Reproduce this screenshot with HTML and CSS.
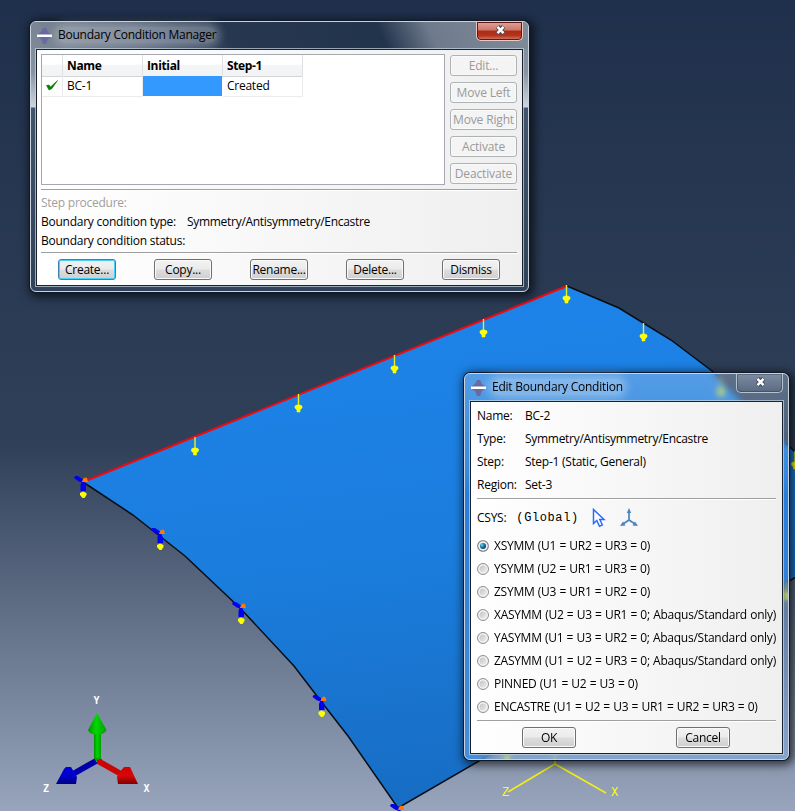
FILE: index.html
```html
<!DOCTYPE html>
<html lang="en">
<head>
<meta charset="utf-8">
<title>Boundary Condition Manager</title>
<link rel="stylesheet" href="styles.css">
</head>
<body>
<svg class="scene" width="795" height="811" viewBox="0 0 795 811">
  <defs>
    <linearGradient id="shell" x1="0.4" y1="0" x2="0.55" y2="1">
      <stop offset="0" stop-color="#1e84ea"/><stop offset=".5" stop-color="#1b7ddd"/><stop offset="1" stop-color="#176cc2"/>
    </linearGradient>
    <linearGradient id="green"><stop offset="0" stop-color="#009400"/><stop offset=".45" stop-color="#00d800"/><stop offset="1" stop-color="#009c00"/></linearGradient>
    <linearGradient id="red" x1="0" y1="0" x2="0" y2="1"><stop offset="0" stop-color="#d00000"/><stop offset=".5" stop-color="#d80808"/><stop offset="1" stop-color="#800000"/></linearGradient>
    <linearGradient id="blue" x1="0" y1="0" x2="0" y2="1"><stop offset="0" stop-color="#0000d8"/><stop offset=".5" stop-color="#0000d0"/><stop offset="1" stop-color="#000080"/></linearGradient>
    <g id="load"><path d="M0 0V14" stroke="#e8ee20" stroke-width="1.4"/><path d="M-3.500 12L-1.500 11H1.500L3.500 12V14L1.500 16V18H-1.500V16L-3.500 14Z" fill="#ff0" stroke="#ff0" stroke-width=".6"/></g>
    <g id="support">
      <path d="M-9-3L-8-5-5-5-2-3 1-1 0 1-3 1-5 0Z" fill="#0000f0"/>
      <path d="M-1 0H1L3 5V10H-2.500V4Z" fill="#0000f0"/>
      <path d="M-1 1L0-2 2-3.500 4-3 5 1Z" fill="#ff7600"/>
      <path d="M-3 12L0 10.500 3.500 12V14L1.500 17H-.5L-3 14Z" fill="#ff0"/>
    </g>
  </defs>
  <path d="M83 482L567 286 619 308 671 340 712 371 795 452 815 475V566L398 808 348 736 320 700 294 666 241 609 185 556 133 515Z" fill="url(#shell)"/>
  <path d="M567 286L619 308 671 340 712 371 795 452M815 566L398 808 348 736 320 700 294 666 241 609 185 556 133 515 83 482" fill="none" stroke="#080d14" stroke-width="1.500"/>
  <path d="M83 482L567 286" stroke="#ec0a10" stroke-width="2"/>
  <use href="#load" x="566.500" y="285"/><use href="#load" x="483.500" y="319"/><use href="#load" x="394.500" y="355"/>
  <use href="#load" x="298.500" y="394"/><use href="#load" x="195" y="437"/><use href="#load" x="643.500" y="323"/>
  <use href="#load" x="721" y="378"/><use href="#load" x="795" y="451"/><use href="#load" x="786" y="582"/>
  <use href="#support" x="83" y="481"/><use href="#support" x="160" y="533"/><use href="#support" x="241" y="607"/>
  <use href="#support" x="321.500" y="700"/><use href="#support" x="399" y="809"/>
  <g class="datum"><path d="M555 730V764L508 792M555 764L606 793"/><circle cx="507" cy="757" r="3"/><text x="502" y="796">Z</text><text x="611" y="796">X</text></g>
  <path d="M94 733H101V760H94Z" fill="url(#green)"/>
  <path d="M97 713L106.500 730Q104 735 97 734.500 90 735 88 730Z" fill="url(#green)"/>
  <path d="M98 761L121 774" stroke="#c80606" stroke-width="6"/>
  <path d="M124 767H130L138 784H118L117 777 119 773Z" fill="url(#red)"/>
  <path d="M96 761L73 774" stroke="#0000a8" stroke-width="6"/>
  <path d="M66 767H71L77 777 76 784H56L64 769Z" fill="url(#blue)"/>
  <path d="M94 758H101L98 763Z" fill="#00a000"/><path d="M97 760L102 759 102 765 97 763Z" fill="#d80000"/>
  <g class="axis"><text x="93.500" y="704">Y</text><text x="143.500" y="792">X</text><text x="43" y="792">Z</text></g>
</svg>

<section class="window manager">
  <header class="titlebar">
    <svg class="logo" width="15" height="16" viewBox="0 0 15 16"><path d="M6 0H9L11 4 14 6V9L11 11 9 16H6L4 11 1 9V6L4 4Z" fill="#696a9f"/><path d="M0 6.500H15V9H0Z" fill="#fff"/></svg>
    <h1>Boundary Condition Manager</h1>
    <span class="close"><svg width="11" height="10" viewBox="0 0 11 10"><path d="M2.500 1.500L8.500 8.500M8.500 1.500L2.500 8.500" stroke="#434c60" stroke-width="4.500"/><path d="M2.500 1.800L8.500 8.200M8.500 1.800L2.500 8.200" stroke="#fff" stroke-width="2.500"/></svg></span>
  </header>
  <div class="panel">
    <div class="top">
      <div class="list">
        <div class="row head"><span></span><span>Name</span><span>Initial</span><span>Step-1</span></div>
        <div class="row"><span class="tick"><svg width="13" height="11" viewBox="0 0 13 11"><path d="M.5 5.500L3 5 4.500 7 11.500 .5 6 8.500 3 10Z" fill="#008000" stroke="#008000" stroke-width=".6"/></svg></span><span>BC-1</span><span class="propagated"></span><span>Created</span></div>
      </div>
      <div class="side">
        <button disabled>Edit...</button><button disabled>Move Left</button><button disabled>Move Right</button><button disabled>Activate</button><button disabled>Deactivate</button>
      </div>
    </div>
    <hr>
    <div class="info">
      <p class="muted">Step procedure:</p>
      <p><span>Boundary condition type:</span><span class="value">Symmetry/Antisymmetry/Encastre</span></p>
      <p>Boundary condition status:</p>
    </div>
    <hr>
    <div class="actions"><button class="default">Create...</button><button>Copy...</button><button>Rename...</button><button>Delete...</button><button>Dismiss</button></div>
  </div>
</section>

<section class="window editor">
  <header class="titlebar">
    <svg class="logo" width="15" height="16" viewBox="0 0 15 16"><path d="M6 0H9L11 4 14 6V9L11 11 9 16H6L4 11 1 9V6L4 4Z" fill="#696a9f"/><path d="M0 6.500H15V9H0Z" fill="#fff"/></svg>
    <h1>Edit Boundary Condition</h1>
    <span class="close"><svg width="11" height="10" viewBox="0 0 11 10"><path d="M2.500 1.500L8.500 8.500M8.500 1.500L2.500 8.500" stroke="#434c60" stroke-width="4.500"/><path d="M2.500 1.800L8.500 8.200M8.500 1.800L2.500 8.200" stroke="#fff" stroke-width="2.500"/></svg></span>
  </header>
  <div class="panel">
    <dl>
      <dt>Name:</dt><dd>BC-2</dd>
      <dt>Type:</dt><dd class="value">Symmetry/Antisymmetry/Encastre</dd>
      <dt>Step:</dt><dd>Step-1 (Static, General)</dd>
      <dt>Region:</dt><dd>Set-3</dd>
    </dl>
    <hr>
    <div class="csys"><span>CSYS:</span><span class="mono">(Global)</span>
      <svg class="pick" width="14" height="20" viewBox="0 0 14 20"><path d="M1.500 1.500V15.500L4.800 12.500 7.500 18.200 10.300 16.800 7.800 11.500H12Z" fill="#fff" stroke="#2b6bff" stroke-width="1.500"/></svg>
      <svg class="triad" width="18" height="20" viewBox="0 0 18 20"><path d="M9 4V12L3 16M9 12L15 16" fill="none" stroke="#4b84c0" stroke-width="1.700"/><path d="M9 0L11.200 5H6.800ZM0 18L3 13.500 5.500 17.500ZM18 18L15 13.500 12.500 17.500Z" fill="#4b84c0"/></svg>
    </div>
    <div class="options">
      <label><i class="radio on"></i><span>XSYMM (U1 = UR2 = UR3 = 0)</span></label>
      <label><i class="radio"></i><span>YSYMM (U2 = UR1 = UR3 = 0)</span></label>
      <label><i class="radio"></i><span>ZSYMM (U3 = UR1 = UR2 = 0)</span></label>
      <label><i class="radio"></i><span>XASYMM (U2 = U3 = UR1 = 0; Abaqus/Standard only)</span></label>
      <label><i class="radio"></i><span>YASYMM (U1 = U3 = UR2 = 0; Abaqus/Standard only)</span></label>
      <label><i class="radio"></i><span>ZASYMM (U1 = U2 = UR3 = 0; Abaqus/Standard only)</span></label>
      <label><i class="radio"></i><span>PINNED (U1 = U2 = U3 = 0)</span></label>
      <label><i class="radio"></i><span>ENCASTRE (U1 = U2 = U3 = UR1 = UR2 = UR3 = 0)</span></label>
    </div>
    <hr>
    <div class="actions"><button>OK</button><button>Cancel</button></div>
  </div>
</section>
</body>
</html>
```
FILE: styles.css
```css
* { box-sizing: border-box; }
body {
  margin: 0; width: 795px; height: 811px; overflow: hidden; position: relative;
  font: 12px/19px "Open Sans", "Noto Sans", sans-serif; letter-spacing: -.25px; color: #000;
  background: linear-gradient(#1f304c 0, #304058 55%, #98a5bc 100%);
}
.scene { display: block; }
.datum path { fill: none; stroke: #f0ee18; stroke-width: 1.6; }
.datum circle { fill: #ff0; }
.datum text { fill: #ff0; font: 12px "Liberation Mono", monospace; }
.axis text { fill: #fff; font: bold 10px "DejaVu Sans Mono", monospace; }

.window {
  position: absolute; padding: 0 5px 5px; border: 1px solid #c9d2dd; border-radius: 6px;
  display: flex; flex-direction: column;
  box-shadow: 0 0 0 1px #10192a, 2px 2px 10px 3px rgba(0,0,0,.65);
}
.manager {
  left: 30px; top: 21px; width: 499px; height: 271px;
  background: linear-gradient(#7d8998 0, #8793a1 50px, #d0d5dc 85px, #42556d 86px, #31435b 100%);
}
.editor {
  left: 464px; top: 373px; width: 325px; height: 387px;
  background: linear-gradient(rgba(185,205,230,.36), rgba(145,180,225,.22) 100px, rgba(70,130,210,.25) 120px, rgba(130,180,240,.45));
  backdrop-filter: blur(3px);
}
.titlebar { display: flex; align-items: center; height: 27px; flex: none; margin: 0 -5px; padding-left: 6px; border-radius: 5px 5px 0 0; }
.manager .titlebar { background: linear-gradient(65deg, #7f8997 0, #5e6b7f 22%, #26374f 40%, #22334c 70%, #6f7b8d 80%, #818c9a 100%); }
.logo { flex: none; }
.titlebar h1 {
  margin: -1px 0 0 6px; font: inherit; line-height: 16px; white-space: nowrap;
  background: rgba(255,255,255,.28); box-shadow: 0 0 8px 4px rgba(255,255,255,.28); border-radius: 8px;
}
.manager h1 { background: rgba(205,212,220,.35); box-shadow: 0 0 8px 4px rgba(205,212,220,.35); }
.close {
  margin-left: auto; margin-right: 5px; align-self: flex-start; width: 47px; height: 19px; padding: 0 0 2px 1px;
  display: flex; align-items: center; justify-content: center;
  border: 1px solid #b8c2ce; border-top: 0; border-radius: 0 0 5px 5px;
  box-shadow: inset 0 0 0 1px rgba(30,40,60,.35);
  background: linear-gradient(rgba(255,255,255,.2), rgba(80,95,120,.25));
}
.manager .close { background: linear-gradient(#e0a59c 0, #cd7667 45%, #b02a14 50%, #b03520 75%, #d8806a); border-color: #e8c8c4; box-shadow: inset 0 0 0 1px #5b1a18; }
.panel {
  flex: 1; border: 1px solid #18222f; outline: 1px solid rgba(200,215,230,.7);
  background: linear-gradient(90deg, #fff, #efefef);
}
hr { height: 2px; margin: 0; border: 0; border-top: 1px solid #a0a0a0; border-bottom: 1px solid #fff; }
button {
  height: 21px; padding: 0; font: inherit; line-height: 17px; letter-spacing: inherit; color: #000; white-space: nowrap;
  border: 1px solid #707070; border-radius: 3px; box-shadow: inset 0 0 0 1px #fafafa;
  background: linear-gradient(#f2f2f2 0, #ebebeb 48%, #dddddd 52%, #cfcfcf);
}
button:disabled { color: #9a9a9a; border-color: #adb2b5; background: #f4f4f4; letter-spacing: -.15px; }
.default { border-color: #3c7fb1; box-shadow: inset 0 0 0 1px #46d0fa; }
.value { letter-spacing: -.29px; }

.manager .panel { padding: 4px 5px 0 4px; }
.top { display: flex; justify-content: space-between; height: 131px; }
.list { width: 404px; border: 1px solid #a5a8b0; background: #fff; padding: 0; }
.row { display: grid; grid-template-columns: 21px 80px 80px 80px; height: 20px; width: 261px; line-height: 20px; }
.row span { padding-left: 4px; border-right: 1px solid #ececec; border-bottom: 1px solid #ececec; }
.row span + span { padding-left: 4px; }
.head { height: 21px; padding-bottom: 1px; font-weight: bold; background: linear-gradient(#fff 45%, #f4f5f7 46%, #f2f3f5); letter-spacing: -.35px; }
.head span { border-right-color: #dfe1e4; border-bottom-color: #d5d5d5; line-height: 21px; }
.row .tick { display: flex; align-items: center; padding: 0 0 2px 4px; }
.row .propagated { background: #3399ff; border: 0; margin: 0 1px 1px 0; }
.side { display: flex; flex-direction: column; gap: 6px; width: 67px; padding-top: 1px; }
.manager hr { margin-top: 4px; }
.info { height: 57px; padding-top: 2px; }
.info + hr { margin-top: 4px; }
.info p { margin: 0; height: 19px; display: flex; gap: 11px; }
.muted { color: #a0a0a0; }
.manager .actions { display: flex; gap: 38px; padding: 5px 0 0 17px; }
.manager .actions button { width: 58px; }

.editor .panel { padding: 2px 6px 0 6px; }
dl { display: grid; grid-template-columns: 48px 1fr; grid-auto-rows: 23px; line-height: 23px; margin: 0; height: 94px; }
dd { margin: 0; }
.csys { display: flex; align-items: center; height: 34px; padding-top: 1px; }
.mono { font: 12px "Liberation Mono", monospace; letter-spacing: .6px; margin-left: 10px; }
.pick { margin-left: 13px; }
.triad { margin-left: 14px; }
.options { display: grid; grid-auto-rows: 23px; height: 186px; word-spacing: .4px; }
.options label { display: flex; align-items: center; gap: 5px; white-space: nowrap; }
.radio { width: 12px; height: 12px; border: 1px solid #8e8f8f; border-radius: 50%; box-shadow: inset 0 0 0 1.500px #f4f4f4; background: linear-gradient(135deg, #b8bcc2, #f4f4f4); flex: none; }
.radio.on { background: radial-gradient(circle at 40% 40%, #6fd8fa 0, #1b7cab 25%, #0c3255 55%); box-shadow: inset 0 0 0 2px #eee; }
.editor .actions { display: flex; justify-content: space-between; padding: 5px 46px 0 45px; }
.editor .actions button { width: 54px; }
```
